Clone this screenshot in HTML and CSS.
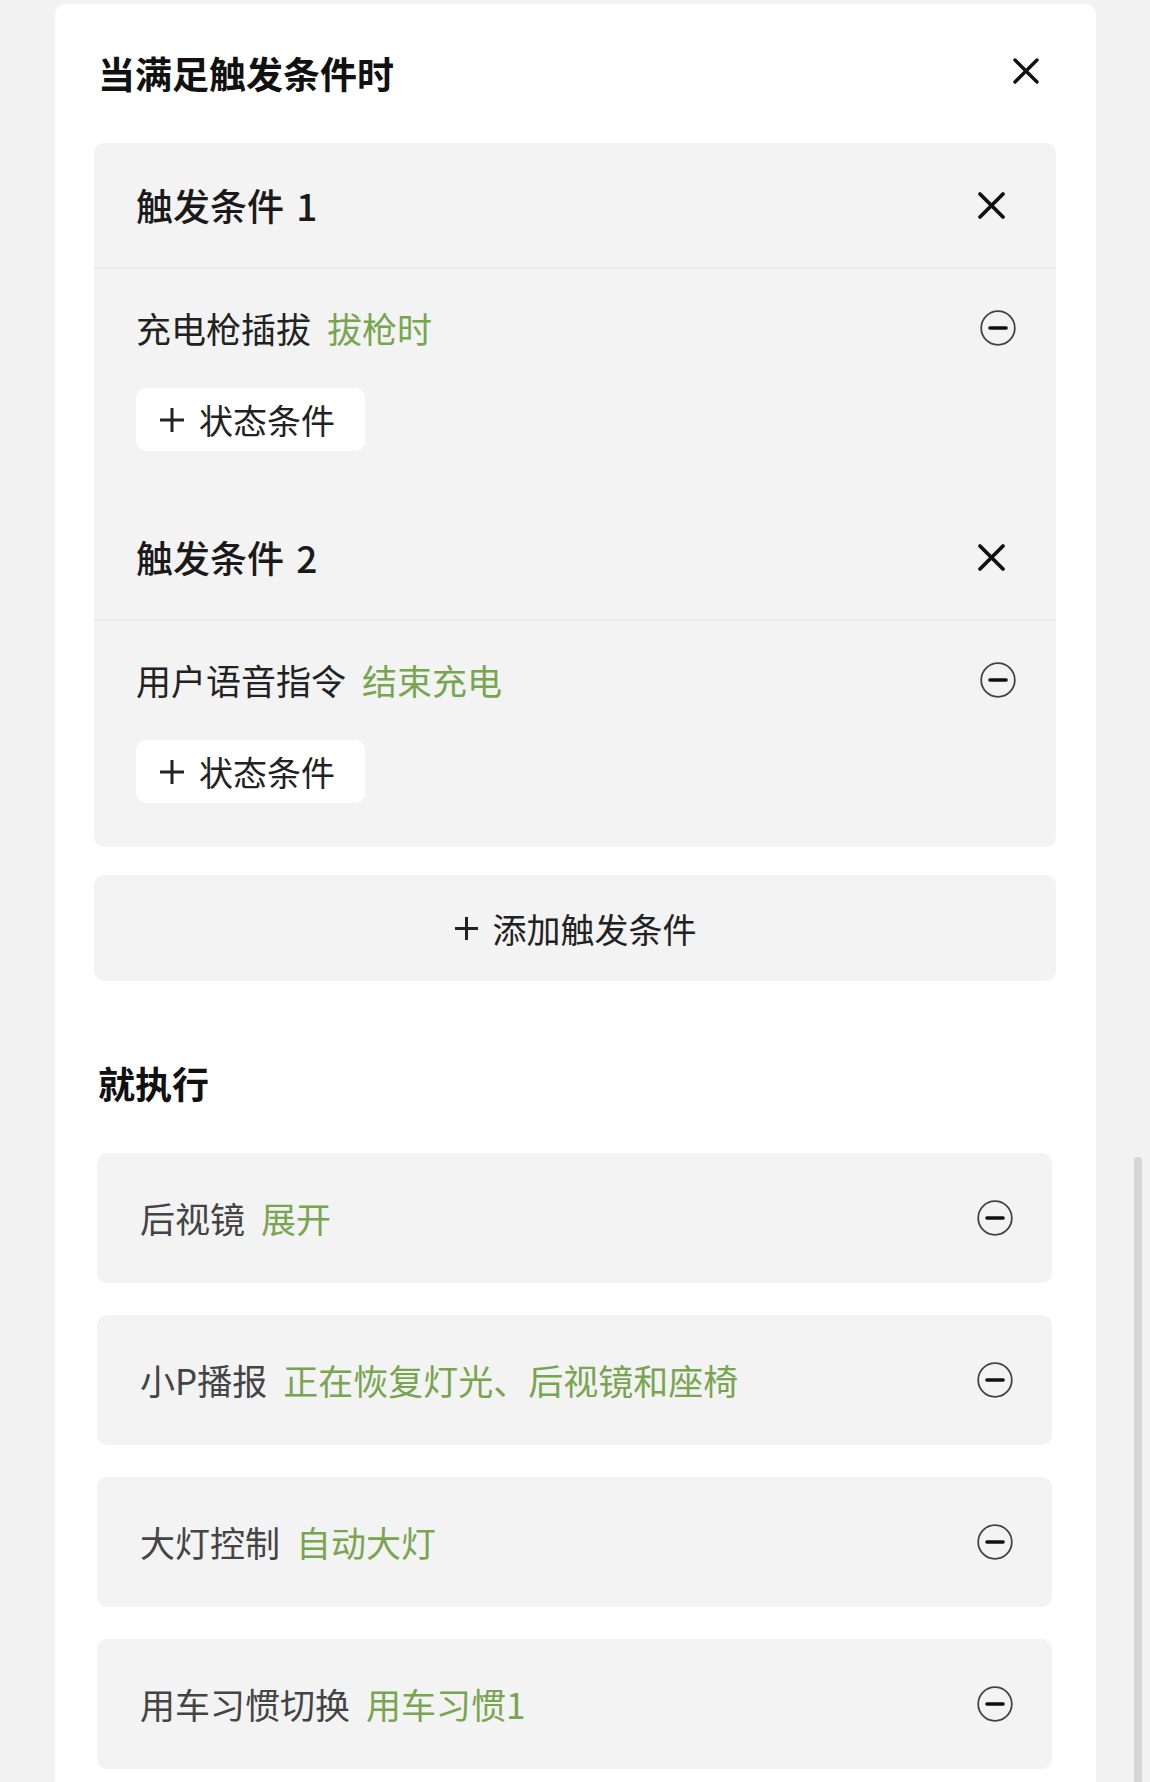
FILE: index.html
```html
<!DOCTYPE html>
<html lang="zh-CN">
<head>
  <meta charset="UTF-8">
  <meta name="viewport" content="width=device-width, initial-scale=1.0">
  <title>场景编辑</title>
  <link rel="stylesheet" href="styles.css">
</head>
<body>
  <div class="sheet">
    <div class="sheet-head">
      <h2 class="section-title">当满足触发条件时</h2>
      <button class="icon-btn close-btn" aria-label="关闭">
        <svg width="28" height="28" viewBox="0 0 28 28"><path d="M3 3 L25 25 M25 3 L3 25" stroke="#111" stroke-width="3.4" stroke-linecap="round" fill="none"/></svg>
      </button>
    </div>

    <div class="trigger-panel">
      <div class="trigger">
        <div class="trigger-head">
          <span>触发条件 1</span>
          <button class="icon-btn" aria-label="删除触发条件">
            <svg width="29" height="29" viewBox="0 0 29 29"><path d="M3 3 L26 26 M26 3 L3 26" stroke="#111" stroke-width="3.8" stroke-linecap="round" fill="none"/></svg>
          </button>
        </div>
        <div class="trigger-body">
          <div class="cond-row">
            <span class="cond-text">充电枪插拔<span class="value">拔枪时</span></span>
            <button class="icon-btn" aria-label="移除">
              <svg width="36" height="36" viewBox="0 0 36 36"><circle cx="18" cy="18" r="16.8" stroke="#444" stroke-width="1.8" fill="none"/><path d="M10 18 H26" stroke="#111" stroke-width="3.6" stroke-linecap="round"/></svg>
            </button>
          </div>
          <button class="add-state">
            <svg width="26" height="26" viewBox="0 0 26 26"><path d="M13 1 V25 M1 13 H25" stroke="#222" stroke-width="3" fill="none"/></svg>
            状态条件
          </button>
        </div>
      </div>

      <div class="trigger">
        <div class="trigger-head">
          <span>触发条件 2</span>
          <button class="icon-btn" aria-label="删除触发条件">
            <svg width="29" height="29" viewBox="0 0 29 29"><path d="M3 3 L26 26 M26 3 L3 26" stroke="#111" stroke-width="3.8" stroke-linecap="round" fill="none"/></svg>
          </button>
        </div>
        <div class="trigger-body">
          <div class="cond-row">
            <span class="cond-text">用户语音指令<span class="value">结束充电</span></span>
            <button class="icon-btn" aria-label="移除">
              <svg width="36" height="36" viewBox="0 0 36 36"><circle cx="18" cy="18" r="16.8" stroke="#444" stroke-width="1.8" fill="none"/><path d="M10 18 H26" stroke="#111" stroke-width="3.6" stroke-linecap="round"/></svg>
            </button>
          </div>
          <button class="add-state">
            <svg width="26" height="26" viewBox="0 0 26 26"><path d="M13 1 V25 M1 13 H25" stroke="#222" stroke-width="3" fill="none"/></svg>
            状态条件
          </button>
        </div>
      </div>
    </div>

    <button class="add-trigger">
      <svg width="25" height="25" viewBox="0 0 25 25"><path d="M12.5 1 V24 M1 12.5 H24" stroke="#222" stroke-width="3" fill="none"/></svg>
      添加触发条件
    </button>

    <h2 class="section-title exec-title">就执行</h2>

    <div class="action-list">
      <div class="action-card">
        <span class="action-text">后视镜<span class="value">展开</span></span>
        <button class="icon-btn" aria-label="移除">
          <svg width="36" height="36" viewBox="0 0 36 36"><circle cx="18" cy="18" r="16.8" stroke="#444" stroke-width="1.8" fill="none"/><path d="M10 18 H26" stroke="#111" stroke-width="3.6" stroke-linecap="round"/></svg>
        </button>
      </div>
      <div class="action-card">
        <span class="action-text">小P播报<span class="value">正在恢复灯光、后视镜和座椅</span></span>
        <button class="icon-btn" aria-label="移除">
          <svg width="36" height="36" viewBox="0 0 36 36"><circle cx="18" cy="18" r="16.8" stroke="#444" stroke-width="1.8" fill="none"/><path d="M10 18 H26" stroke="#111" stroke-width="3.6" stroke-linecap="round"/></svg>
        </button>
      </div>
      <div class="action-card">
        <span class="action-text">大灯控制<span class="value">自动大灯</span></span>
        <button class="icon-btn" aria-label="移除">
          <svg width="36" height="36" viewBox="0 0 36 36"><circle cx="18" cy="18" r="16.8" stroke="#444" stroke-width="1.8" fill="none"/><path d="M10 18 H26" stroke="#111" stroke-width="3.6" stroke-linecap="round"/></svg>
        </button>
      </div>
      <div class="action-card">
        <span class="action-text">用车习惯切换<span class="value">用车习惯1</span></span>
        <button class="icon-btn" aria-label="移除">
          <svg width="36" height="36" viewBox="0 0 36 36"><circle cx="18" cy="18" r="16.8" stroke="#444" stroke-width="1.8" fill="none"/><path d="M10 18 H26" stroke="#111" stroke-width="3.6" stroke-linecap="round"/></svg>
        </button>
      </div>
    </div>
  </div>

  <div class="scroll-thumb"></div>
</body>
</html>
```

FILE: styles.css
```css
html, body {
  margin: 0;
  height: 1782px;
  overflow: hidden;
}

body {
  background-color: #f2f2f2;
  font-family: "Noto Sans CJK SC", "Noto Sans", sans-serif;
  color: #222;
  position: relative;
}

button {
  font-family: inherit;
  border: none;
  background: none;
  padding: 0;
  cursor: pointer;
}

.sheet {
  margin: 4px 0 0 55px;
  width: 1041px;
  min-height: 1800px;
  box-sizing: border-box;
  padding: 0 40px 0 39px;
  background-color: #ffffff;
  border-radius: 10px 10px 0 0;
}

.sheet-head {
  height: 139px;
  display: flex;
  align-items: center;
  justify-content: space-between;
}

.section-title {
  margin: 0;
  padding-left: 4px;
  font-size: 37px;
  font-weight: 700;
  color: #111;
  line-height: 1.2;
}

.icon-btn {
  display: flex;
  align-items: center;
  justify-content: center;
}

.close-btn {
  margin: 0 16px 6px 0;
}

/* trigger conditions */
.trigger-panel {
  background-color: #f3f3f3;
  border-radius: 10px;
}

.trigger-head {
  height: 124px;
  border-bottom: 2px solid #ebebeb;
  display: flex;
  align-items: center;
  justify-content: space-between;
  padding: 0 50px 0 42px;
  font-size: 37px;
  font-weight: 500;
  color: #1a1a1a;
  word-spacing: 4px;
}

.trigger-body {
  padding: 29px 0 44px 42px;
}

.cond-row {
  height: 60px;
  display: flex;
  align-items: center;
  justify-content: space-between;
  padding-right: 40px;
}

.cond-text, .action-text {
  font-size: 35px;
  line-height: 1.2;
  color: #222;
}

.action-text {
  color: #444;
}

.value {
  color: #78a550;
  margin-left: 16px;
}

.add-state {
  margin-top: 30px;
  height: 63px;
  width: 229px;
  padding-left: 23px;
  display: flex;
  align-items: center;
  gap: 14px;
  background-color: #ffffff;
  border-radius: 10px;
  font-size: 34px;
  color: #222;
}

.add-trigger {
  margin-top: 28px;
  width: 100%;
  height: 106px;
  display: flex;
  align-items: center;
  justify-content: center;
  gap: 14px;
  background-color: #f3f3f3;
  border-radius: 10px;
  font-size: 34px;
  color: #222;
}

/* actions */
.exec-title {
  height: 70px;
  line-height: 70px;
  margin: 67px 0 35px;
}

.action-list {
  display: flex;
  flex-direction: column;
  gap: 32px;
  margin: 0 4px 0 3px;
}

.action-card {
  height: 130px;
  display: flex;
  align-items: center;
  justify-content: space-between;
  padding: 0 39px 0 43px;
  background-color: #f3f3f3;
  border-radius: 10px;
}

.scroll-thumb {
  position: absolute;
  left: 1134px;
  top: 1157px;
  width: 8px;
  height: 700px;
  background-color: #d6d6d6;
  border-radius: 4px;
}
```
